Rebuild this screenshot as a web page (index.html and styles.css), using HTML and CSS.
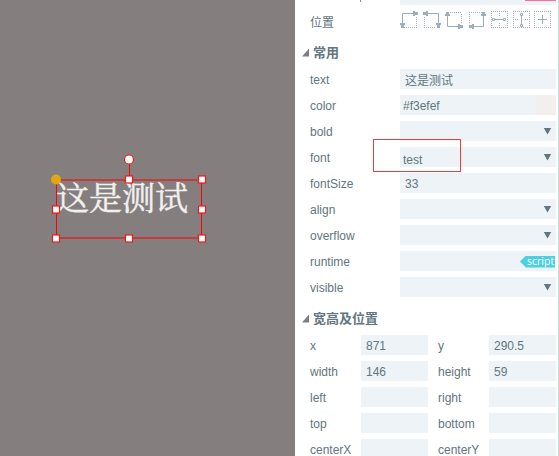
FILE: index.html
```html
<!DOCTYPE html>
<html lang="zh-CN">
<head>
<meta charset="utf-8">
<title>Inspector</title>
<link rel="stylesheet" href="styles.css">
</head>
<body>
<main class="stage">
  <div class="stage-text">这是测试</div>
  <svg class="selection" width="295" height="456" viewBox="0 0 295 456">
    <path class="edge-soft" d="M56 180H202M56 238H202"/>
    <path class="edge" d="M56.5 180V238M201.5 180V238M129.5 164V176"/>
    <circle class="handle" cx="129" cy="159.5" r="4.5"/>
    <g class="handle">
      <rect x="125.5" y="176" width="7" height="7"/>
      <rect x="198.5" y="176" width="7" height="7"/>
      <rect x="52.5" y="206" width="7" height="7"/>
      <rect x="198.5" y="206" width="7" height="7"/>
      <rect x="52.5" y="235" width="7" height="7"/>
      <rect x="125.5" y="235" width="7" height="7"/>
      <rect x="198.5" y="235" width="7" height="7"/>
    </g>
    <circle class="anchor" cx="56" cy="179.5" r="5"/>
  </svg>
</main>
<aside class="panel">
  <div class="row row-cut"><i class="stem"></i><span class="field"><i class="pink"></i></span></div>
  <div class="row row-pos">
    <span class="label">位置</span>
    <svg class="tools" width="152" height="18" viewBox="0 0 152 18">
      <g class="dots">
        <path d="M4 17.5H17M16.5 7V17"/>
        <path d="M24.5 7V17M24 17.5H36"/>
        <path d="M50 2.5H62M61.5 4V14"/>
        <path d="M69.5 2V13M69 2.5H82"/>
        <path d="M91.5 1V18M91 1.5H108M107.5 1V18M91 17.5H108M99.5 1V6M99.5 13V18"/>
        <path d="M113.5 1V18M113 1.5H130M129.5 1V18M113 17.5H130M113 9.5H119M125 9.5H130"/>
        <path d="M134.5 1V18M134 1.5H151M150.5 1V18M134 17.5H151"/>
      </g>
      <g class="line">
        <path d="M2.5 14V3.5H14M27 3.5H38.5V14M47.5 6V16.5H58M73 16.5H83.5V6M93 9.5H106M121.5 3V15M138 9.5H147M142.5 5V14"/>
        <path class="ring" d="M92.5 8.500h2v2h-2zM103.5 8.500h2v2h-2zM120.5 3.500h2v2h-2zM120.5 14.500h2v2h-2z"/>
      </g>
      <path class="solid" d="M13 1V6H15V5H18V2H15V1ZM0 13H5V15H4V18H1V15H0ZM28 1V6H26V5H23V2H26V1ZM36 13H41V15H40V18H37V15H36ZM45 6H50V4H49V2H46V4H45ZM58 14V19H60V18H63V15H60V14ZM74 14V19H72V18H69V15H72V14ZM81 6H86V4H85V2H82V4H81Z"/>
    </svg>
  </div>
  <h2 class="heading"><i class="fold"></i>常用</h2>
  <section class="rows">
    <div class="row"><span class="label">text</span><span class="field inset cjk">这是测试</span></div>
    <div class="row"><span class="label">color</span><span class="field">#f3efef<i class="swatch"></i></span></div>
    <div class="row"><span class="label">bold</span><span class="field"><i class="arrow"></i></span></div>
    <div class="row"><span class="label">font</span><span class="field"><b class="value">test</b><i class="arrow"></i></span></div>
    <div class="row"><span class="label">fontSize</span><span class="field inset">33</span></div>
    <div class="row"><span class="label">align</span><span class="field"><i class="arrow"></i></span></div>
    <div class="row"><span class="label">overflow</span><span class="field"><i class="arrow"></i></span></div>
    <div class="row"><span class="label">runtime</span><span class="field"><em class="script">script</em></span></div>
    <div class="row"><span class="label">visible</span><span class="field"><i class="arrow"></i></span></div>
  </section>
  <h2 class="heading second"><i class="fold"></i>宽高及位置</h2>
  <section class="pairs">
    <span class="label">x</span><span class="field inset">871</span><span class="label next">y</span><span class="field inset">290.5</span>
    <span class="label">width</span><span class="field inset">146</span><span class="label next">height</span><span class="field inset">59</span>
    <span class="label">left</span><span class="field"></span><span class="label next">right</span><span class="field"></span>
    <span class="label">top</span><span class="field"></span><span class="label next">bottom</span><span class="field"></span>
    <span class="label">centerX</span><span class="field"></span><span class="label next">centerY</span><span class="field"></span>
  </section>
</aside>
<div class="callout"></div>
</body>
</html>
```
FILE: styles.css
```css
* { box-sizing: border-box; }
body {
  margin: 0;
  width: 559px;
  height: 456px;
  overflow: hidden;
  display: flex;
  position: relative;
  background: #fff;
  color: #627680;
  font: 12px/20px "Liberation Sans", "Noto Sans CJK SC", sans-serif;
}
.stage {
  position: relative;
  width: 295px;
  height: 456px;
  flex: none;
  background: #847f7e;
}
.stage-text {
  padding: 176px 0 0 56px;
  color: #f3efef;
  font: 400 33px/40px "Noto Serif CJK SC", "Noto Sans CJK SC", serif;
  -webkit-text-stroke: 0.4px #f3efef;
  white-space: nowrap;
}
.selection { position: absolute; left: 0; top: 0; }
.edge-soft { stroke: #c43c3b; stroke-width: 2; }
.edge { stroke: #f00; stroke-width: 1; fill: none; }
.handle { fill: #fff; stroke: #f01818; stroke-width: 1.2; }
.anchor { fill: #e2a710; }

.panel {
  width: 264px;
  height: 456px;
  overflow: hidden;
  border-right: 1px solid #d0dcdc;
  padding-left: 15px;
}
.row { display: flex; height: 20px; }
.label { width: 90px; padding-top: 1px; flex: none; }
.field {
  display: flex;
  align-items: center;
  width: 156px;
  height: 20px;
  padding-left: 3px;
  padding-top: 1px;
  background: #edf3f6;
  white-space: nowrap;
}
.inset { padding-left: 5px; }
.row-cut { height: 5px; margin-bottom: 4px; align-items: flex-start; }
.stem { width: 1px; height: 2px; margin: 0 39px 0 50px; background: #7c8d96; }
.row-cut .field { height: 5px; padding: 0; align-items: flex-start; }
.pink { width: 31px; height: 1px; margin-left: 125px; background: #ff6b9d; }
.row-pos { height: 26px; }
.row-pos .label { padding-top: 4px; }
.tools { margin-top: 1px; flex: none; fill: none; overflow: visible; }
.dots { stroke: #a3b4bd; stroke-dasharray: 1 1; }
.line { stroke: #9cafb9; }
.ring { fill: #fff; }
.solid { fill: #9cafb9; }

.heading {
  display: flex;
  align-items: center;
  height: 20px;
  margin: 8px 0 6px -8px;
  color: #627680;
  font-size: 13px;
  font-weight: 700;
}
.fold {
  width: 7px;
  height: 8px;
  margin-right: 4px;
  margin-top: -1px;
  background: #7b7f81;
  clip-path: polygon(100% 0, 100% 100%, 0 100%);
}
.rows { display: grid; row-gap: 6px; }
.cjk { padding-top: 3px; }
.swatch { width: 20px; height: 20px; margin: -1px 0 0 auto; background: #f3efef; }
.arrow {
  width: 8px;
  height: 7px;
  margin: -1px 4.5px 0 auto;
  background: #627680;
  clip-path: polygon(0 0, 100% 0, 50% 100%);
}
.value { font-weight: 400; padding-top: 4px; }
.script {
  width: 35px;
  height: 12px;
  margin-left: auto;
  margin-right: 1px;
  padding-left: 7px;
  background: #4dcfdf;
  clip-path: polygon(0 50%, 6px 0, 100% 0, 100% 100%, 6px 100%);
  color: #fff;
  font: 10.5px/11px "Open Sans", sans-serif;
}
.second { margin: 12px 0 6px -8px; }
.pairs {
  display: grid;
  grid-template-columns: 51px 67px 61px 67px;
  grid-auto-rows: 20px;
  row-gap: 6px;
}
.pairs .label { width: auto; }
.pairs .field { width: 67px; }
.next { padding-left: 10px; }
.callout {
  position: absolute;
  left: 373px;
  top: 139px;
  width: 88px;
  height: 33px;
  border: 1px solid #f23c3c;
}
```
